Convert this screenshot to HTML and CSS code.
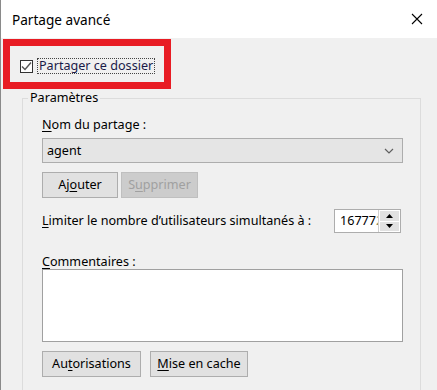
FILE: index.html
```html
<!DOCTYPE html>
<html lang="fr">
<head>
<meta charset="utf-8">
<title>Partage avancé</title>
<link rel="stylesheet" href="styles.css">
</head>
<body>
<div class="window">
  <div class="titlebar">
    <span class="title">Partage avancé</span>
    <svg class="close" width="12" height="12" viewBox="0 0 12 12"><path d="M1 1L11 11M11 1L1 11" stroke="#000" stroke-width="1.1" fill="none"/></svg>
  </div>
  <div class="content">
    <div class="check-row">
      <span class="checkbox"><svg width="11" height="11" viewBox="0 0 11 11"><path d="M1 5.5L4 8.5L10 1.5" stroke="#555" stroke-width="1.4" fill="none"/></svg></span>
      <span class="check-label">Partager ce dossier</span>
    </div>
    <fieldset class="group">
      <legend class="legend">Paramètres</legend>
      <div class="group-inner">
        <div class="label first"><u>N</u>om du partage :</div>
        <div class="combo"><span>agent</span>
          <svg width="10" height="6" viewBox="0 0 10 6"><path d="M1 1L5 5L9 1" stroke="#606060" stroke-width="1.2" fill="none"/></svg>
        </div>
        <div class="btn-row top">
          <span class="btn w76">Aj<u>o</u>uter</span>
          <span class="btn w77 disabled">S<u>u</u>pprimer</span>
        </div>
        <div class="limit-row">
          <span class="label"><u>L</u>imiter le nombre d’utilisateurs simultanés à :</span>
          <div class="spin">
            <span class="spin-text">16777<span class="clip">2</span></span>
            <span class="spin-btns">
              <span class="spin-btn"><svg width="7" height="4" viewBox="0 0 7 4"><path d="M0 4L3.5 0L7 4Z" fill="#000"/></svg></span>
              <span class="spin-btn"><svg width="7" height="4" viewBox="0 0 7 4"><path d="M0 0L3.5 4L7 0Z" fill="#000"/></svg></span>
            </span>
          </div>
        </div>
        <div class="label comments"><u>C</u>ommentaires :</div>
        <div class="textarea"></div>
        <div class="btn-row bottom">
          <span class="btn w99">Au<u>t</u>orisations</span>
          <span class="btn w98"><u>M</u>ise en cache</span>
        </div>
      </div>
    </fieldset>
  </div>
  <div class="highlight"></div>
</div>
</body>
</html>
```
FILE: styles.css
```css
* { box-sizing: border-box; }
html, body { margin: 0; padding: 0; }
body {
  width: 437px;
  height: 390px;
  overflow: hidden;
  font-family: "Noto Sans", "Open Sans", sans-serif;
  font-size: 12.6px;
  color: #000;
  background: #f0f0f0;
}
.window {
  position: relative;
  width: 437px;
  height: 390px;
  border-left: 1px solid #8a8a8a;
  background: #f0f0f0;
  overflow: hidden;
}
.titlebar {
  height: 38px;
  background: #fff;
  display: flex;
  align-items: center;
  justify-content: space-between;
  padding: 0 14px 0 11px;
}
.title { font-size: 13.6px; line-height: 18px; margin-top: 1px; }
.close { display: block; }
.content { padding: 0; }
.check-row {
  display: flex;
  align-items: center;
  height: 16px;
  margin-top: 20px;
  margin-left: 19px;
}
.checkbox {
  width: 13px;
  height: 13px;
  border: 1px solid #333;
  background: #fff;
  display: flex;
  align-items: center;
  justify-content: center;
}
.checkbox svg { display: block; }
.check-label {
  margin-left: 5px;
  padding: 0 1px;
  line-height: 14px;
  outline: 1px dotted #444;
  outline-offset: 0;
  color: #1a1a48;
}
.group {
  margin: 16px 0 0 21px;
  width: 399px;
  padding: 0;
  border: 1px solid #dcdcdc;
  height: 400px;
}
.legend {
  margin-left: 5px;
  padding: 0 2px;
  line-height: 16px;
}
.group-inner { padding: 0 17px 0 19px; display: flex; flex-direction: column; }
.label { line-height: 16px; }
.label.first { margin-top: 11px; }
.combo {
  margin-top: 5px;
  height: 25px;
  border: 1px solid #adadad;
  background: #e5e5e5;
  display: flex;
  align-items: center;
  justify-content: space-between;
  padding: 0 8px 0 4px;
}
.combo svg { display: block; }
.btn-row { display: flex; }
.btn-row.top { margin-top: 9px; gap: 3px; }
.btn-row.bottom { margin-top: 9px; gap: 9px; }
.btn {
  height: 26px;
  border: 1px solid #adadad;
  background: #e1e1e1;
  display: flex;
  align-items: center;
  justify-content: center;
  padding-bottom: 1px;
}
.btn.disabled { background: #cccccc; border-color: #bfbfbf; color: #a0a0a0; }
.w76 { width: 76px; }
.w77 { width: 77px; }
.w99 { width: 99px; }
.w98 { width: 98px; }
.limit-row {
  margin-top: 11px;
  height: 24px;
  display: flex;
  align-items: center;
  justify-content: space-between;
  padding-right: 2px;
}
.spin {
  width: 67px;
  height: 24px;
  border: 1px solid #adadad;
  background: #fff;
  display: flex;
}
.spin-text {
  width: 43px;
  overflow: hidden;
  white-space: nowrap;
  line-height: 22px;
  padding-left: 5px;
}
.spin-text .clip { color: #8a8a60; }
.spin-btns {
  flex: 1;
  display: flex;
  flex-direction: column;
  gap: 1px;
  padding: 1px;
  background: #fff;
  border-left: 1px solid #d0d0d0;
}
.spin-btn {
  flex: 1;
  background: #e1e1e1;
  display: flex;
  align-items: center;
  justify-content: center;
}
.spin-btn svg { display: block; }
.label.comments { margin-top: 21px; line-height: 15px; }
.textarea {
  height: 73px;
  border: 1px solid #a0a0a0;
  background: #fff;
}
u { text-underline-offset: 2px; text-decoration-thickness: 1px; }
.highlight {
  position: absolute;
  left: 2px;
  top: 39px;
  width: 168px;
  height: 50px;
  border: 7px solid #e81c24;
  pointer-events: none;
}
```
